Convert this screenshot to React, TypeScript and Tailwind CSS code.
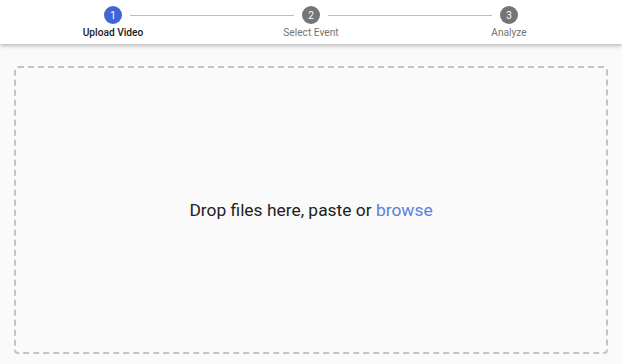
import React from 'react'

const steps = ['Upload Video', 'Select Event', 'Analyze']

export default function App() {
  const active = 0

  return (
    <div className="w-[622px] h-[364px] bg-[#fafafa] flex flex-col font-['Roboto',sans-serif] overflow-hidden">
      {/* Stepper */}
      <div className="h-[44px] bg-white shadow-[0_2px_4px_rgba(0,0,0,0.25)] flex px-[14px] relative z-10">
        {steps.map((label, i) => (
          <div key={label} className="flex-1 relative flex flex-col items-center pt-[6px]">
            {i > 0 && (
              <div className="absolute top-[15px] left-[calc(-50%+17px)] right-[calc(50%+17px)] h-px bg-[#bdbdbd]" />
            )}
            <div
              className={`w-[18px] h-[18px] rounded-full flex items-center justify-center text-white text-[10px] ${
                i === active ? 'bg-[#3f66d4]' : 'bg-[#757575]'
              }`}
            >
              {i + 1}
            </div>
            <span
              className={`mt-[2px] text-[10.2px] leading-[14px] ${
                i === active ? 'text-[#212121] font-medium' : 'text-[#757575]'
              }`}
            >
              {label}
            </span>
          </div>
        ))}
      </div>

      {/* Drop zone */}
      <div className="flex-1 px-[14px] pt-[22px] pb-[10px]">
        <div className="h-full border-2 border-dashed border-[#c4c4c4] rounded-[4px] flex items-center justify-center">
          <p className="text-[17.4px] text-[#212121]">
            Drop files here, paste or <span className="text-[#5b7fdc] cursor-pointer">browse</span>
          </p>
        </div>
      </div>
    </div>
  )
}
